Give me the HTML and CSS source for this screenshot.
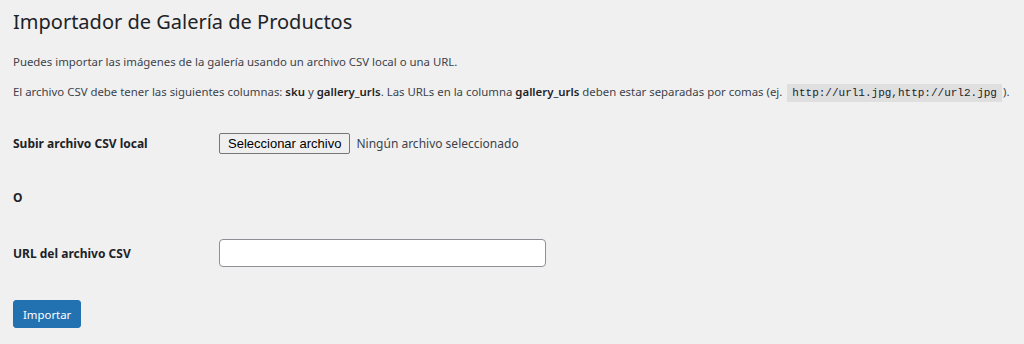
FILE: index.html
```html
<!DOCTYPE html>
<html lang="es">
<head>
    <meta charset="UTF-8">
    <title>Importador de Galería de Productos</title>
    <link rel="stylesheet" href="styles.css">
</head>
<body>
    <div class="wrap">
        <h1>Importador de Galería de Productos</h1>
        <p class="intro">Puedes importar las imágenes de la galería usando un archivo CSV local o una URL.</p>
        <p class="intro second">El archivo CSV debe tener las siguientes columnas: <strong>sku</strong> y <strong>gallery_urls</strong>. Las URLs en la columna <strong>gallery_urls</strong> deben estar separadas por comas (ej. <code>http://url1.jpg,http://url2.jpg</code>).</p>

        <form class="import-form">
            <div class="form-row row-file">
                <label class="row-label">Subir archivo CSV local</label>
                <div class="row-field">
                    <span class="file-button">Seleccionar archivo</span>
                    <span class="file-name">Ningún archivo seleccionado</span>
                </div>
            </div>
            <div class="form-row row-or">
                <span class="row-label">O</span>
            </div>
            <div class="form-row row-url">
                <label class="row-label" for="csv-url">URL del archivo CSV</label>
                <div class="row-field">
                    <input type="text" id="csv-url" class="url-input">
                </div>
            </div>
            <div class="submit-row">
                <button type="button" class="button-primary">Importar</button>
            </div>
        </form>
    </div>
</body>
</html>
```

FILE: styles.css
```css
:root {
    --bg: #f0f0f1;
    --text: #1d2327;
    --text-soft: #3c434a;
    --primary: #2271b1;
    --input-border: #8c8f94;
}

* {
    box-sizing: border-box;
}

body {
    margin: 0;
    background: var(--bg);
    color: var(--text-soft);
    font-family: "Noto Sans", "Open Sans", sans-serif;
    font-size: 11.4px;
}

.wrap {
    padding: 0 13px;
}

h1 {
    margin: 0;
    padding-top: 8px;
    font-size: 20px;
    font-weight: 400;
    line-height: 28px;
    color: var(--text);
}

.intro {
    margin: 16px 0 0;
    line-height: 20px;
    white-space: nowrap;
}

.intro.second {
    margin-top: 10px;
}

.intro strong {
    color: var(--text);
    font-weight: 600;
}

code {
    font-family: "Liberation Mono", monospace;
    font-size: 11px;
    background: rgba(0, 0, 0, 0.07);
    padding: 3px 5px 3px;
    margin: 0 1px 0 2px;
    color: var(--text);
}

.import-form {
    margin-top: 10px;
}

.form-row {
    display: flex;
    align-items: center;
}

.row-file {
    height: 60px;
}

.row-or {
    height: 48px;
}

.row-url {
    height: 64px;
}

.row-label {
    width: 206px;
    font-size: 12px;
    font-weight: 700;
    color: var(--text);
}

.row-field {
    display: flex;
    align-items: center;
}

.file-button {
    display: inline-block;
    height: 21px;
    line-height: 19px;
    padding: 0 8px;
    font-family: "Liberation Sans", Arial, sans-serif;
    font-size: 13px;
    color: #000;
    background: #efefef;
    border: 1px solid #767676;
    border-radius: 2px;
}

.file-name {
    margin-left: 6px;
    font-size: 12px;
    color: var(--text-soft);
}

.url-input {
    width: 327px;
    height: 28px;
    margin: 0;
    background: #fff;
    border: 1px solid var(--input-border);
    border-radius: 4px;
    font-size: 13px;
}

.submit-row {
    margin-top: 15px;
}

.button-primary {
    height: 28px;
    padding: 0 9px;
    border: 1px solid var(--primary);
    border-radius: 3px;
    background: var(--primary);
    color: #fff;
    font-family: "Noto Sans", "Open Sans", sans-serif;
    font-size: 11.4px;
    cursor: pointer;
}
```
